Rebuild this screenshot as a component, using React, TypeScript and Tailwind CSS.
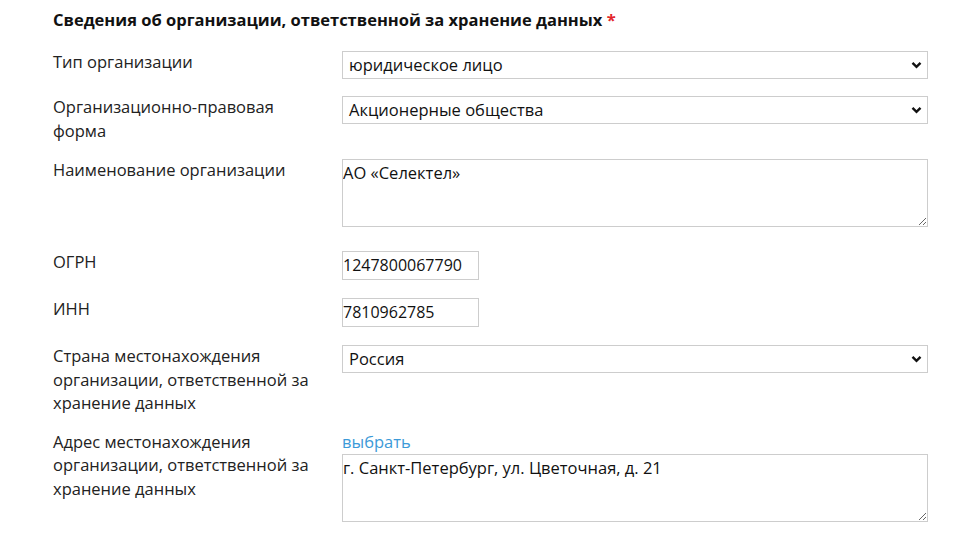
import React from 'react';

const Chevron = () => (
  <svg className="pointer-events-none absolute right-[5px] top-1/2 -translate-y-1/2" width="11" height="8" viewBox="0 0 11 8">
    <path d="M1.5 1.8 L5.5 5.8 L9.5 1.8" fill="none" stroke="#111" strokeWidth="2.4" />
  </svg>
);

function Select({ value }: { value: string }) {
  return (
    <div className="relative w-[586px] h-[28px] border border-[#cdcdcd] bg-white">
      <div className="pl-[6px] leading-[26px] text-[16.5px] text-[#111]">{value}</div>
      <Chevron />
    </div>
  );
}

function Area({ value }: { value: string }) {
  return (
    <textarea
      readOnly
      defaultValue={value}
      className="block w-[586px] h-[68px] border border-[#cdcdcd] bg-white px-0 pt-[1px] text-[16.5px] leading-[24px] text-[#111] outline-none resize-y"
    />
  );
}

function Input({ value }: { value: string }) {
  return (
    <div className="w-[137px] h-[29px] border border-[#cdcdcd] bg-white leading-[27px] text-[16px] text-[#111]">
      {value}
    </div>
  );
}

function Row({ label, children, className }: { label: React.ReactNode; children: React.ReactNode; className: string }) {
  return (
    <div className={`flex ${className}`}>
      <div className="w-[289px] pr-2 text-[16.5px] leading-[23.5px] text-[#222] -mt-[1px]">{label}</div>
      <div>{children}</div>
    </div>
  );
}

export default function App() {
  return (
    <div className="w-[954px] h-[533px] bg-white pl-[53px] pt-[9px] font-['Open_Sans',sans-serif] overflow-hidden">
      <h2 className="text-[16.5px] font-bold leading-[22px] text-[#111]">
        Сведения об организации, ответственной за хранение данных <span className="text-[#e3262a]">*</span>
      </h2>
      <Row label="Тип организации" className="mt-[20px]">
        <Select value="юридическое лицо" />
      </Row>
      <Row label={<>Организационно-правовая<br />форма</>} className="mt-[17px]">
        <Select value="Акционерные общества" />
      </Row>
      <Row label="Наименование организации" className="mt-[17px]">
        <Area value="АО «Селектел»" />
      </Row>
      <Row label="ОГРН" className="mt-[24px]">
        <Input value="1247800067790" />
      </Row>
      <Row label="ИНН" className="mt-[18px]">
        <Input value="7810962785" />
      </Row>
      <Row label={<>Страна местонахождения<br />организации, ответственной за<br />хранение данных</>} className="mt-[18px]">
        <Select value="Россия" />
      </Row>
      <Row label={<>Адрес местонахождения<br />организации, ответственной за<br />хранение данных</>} className="mt-[16px]">
        <div className="-mt-[1px]">
          <a className="block text-[16.5px] leading-[24px] text-[#3c9ad8]">выбрать</a>
          <Area value="г. Санкт-Петербург, ул. Цветочная, д. 21" />
        </div>
      </Row>
    </div>
  );
}
